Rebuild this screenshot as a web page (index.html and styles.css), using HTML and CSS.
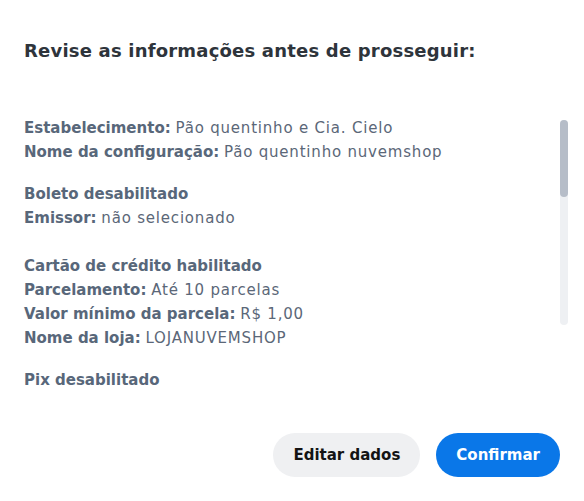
FILE: index.html
```html
<!DOCTYPE html>
<html lang="pt-BR">
<head>
<meta charset="utf-8">
<title>Revise as informações</title>
<link rel="stylesheet" href="styles.css">
</head>
<body>
<div class="modal">
  <h1 class="title">Revise as informações antes de prosseguir:</h1>
  <div class="content">
    <div class="scroll">
      <div class="group">
        <p class="line"><b>Estabelecimento:</b> <span>Pão quentinho e Cia. Cielo</span></p>
        <p class="line"><b>Nome da configuração:</b> <span>Pão quentinho nuvemshop</span></p>
      </div>
      <div class="group">
        <p class="line"><b>Boleto desabilitado</b></p>
        <p class="line"><b>Emissor:</b> <span>não selecionado</span></p>
      </div>
      <div class="group group-wide">
        <p class="line"><b>Cartão de crédito habilitado</b></p>
        <p class="line"><b>Parcelamento:</b> <span>Até 10 parcelas</span></p>
        <p class="line"><b>Valor mínimo da parcela:</b> <span>R$ 1,00</span></p>
        <p class="line"><b>Nome da loja:</b> <span>LOJANUVEMSHOP</span></p>
      </div>
      <div class="group">
        <p class="line"><b>Pix desabilitado</b></p>
      </div>
    </div>
    <div class="scrollbar"><div class="thumb"></div></div>
  </div>
  <div class="footer">
    <button class="btn btn-secondary">Editar dados</button>
    <button class="btn btn-primary">Confirmar</button>
  </div>
</div>
</body>
</html>
```
FILE: styles.css
```css
* { box-sizing: border-box; }
html, body { margin: 0; padding: 0; background: #ffffff; }
body {
  font-family: "DejaVu Sans", "Open Sans", sans-serif;
  width: 584px;
  height: 501px;
  overflow: hidden;
}
.modal {
  display: flex;
  flex-direction: column;
  padding: 0 24px;
  height: 501px;
}
.title {
  margin: 39px 0 0;
  font-size: 18px;
  line-height: 24px;
  font-weight: 700;
  letter-spacing: 0.2px;
  color: #2e343b;
}
.content {
  position: relative;
  margin-top: 53px;
  height: 294px;
}
.scroll {
  display: flex;
  flex-direction: column;
}
.group {
  display: flex;
  flex-direction: column;
  margin-bottom: 18px;
}
.group-wide { margin-top: 6px; }
.line {
  margin: 0;
  font-size: 15px;
  line-height: 24px;
  color: #5b6778;
}
.line b { font-weight: 700; color: #58677a; }
.line span { letter-spacing: 0.8px; }
.scrollbar {
  position: absolute;
  right: -8px;
  top: 4px;
  width: 8px;
  height: 205px;
  background: #eef0f3;
  border-radius: 4px;
}
.thumb {
  width: 8px;
  height: 77px;
  background: #b6bdc8;
  border-radius: 4px;
}
.footer {
  display: flex;
  justify-content: flex-end;
  gap: 16px;
  margin-top: 23px;
}
.btn {
  height: 44px;
  border: none;
  border-radius: 22px;
  padding: 0 20px;
  font-family: inherit;
  font-size: 15px;
  font-weight: 600;
}
.btn-secondary { background: #eff0f2; color: #141414; }
.btn-primary { background: #0a77e8; color: #ffffff; }
```
